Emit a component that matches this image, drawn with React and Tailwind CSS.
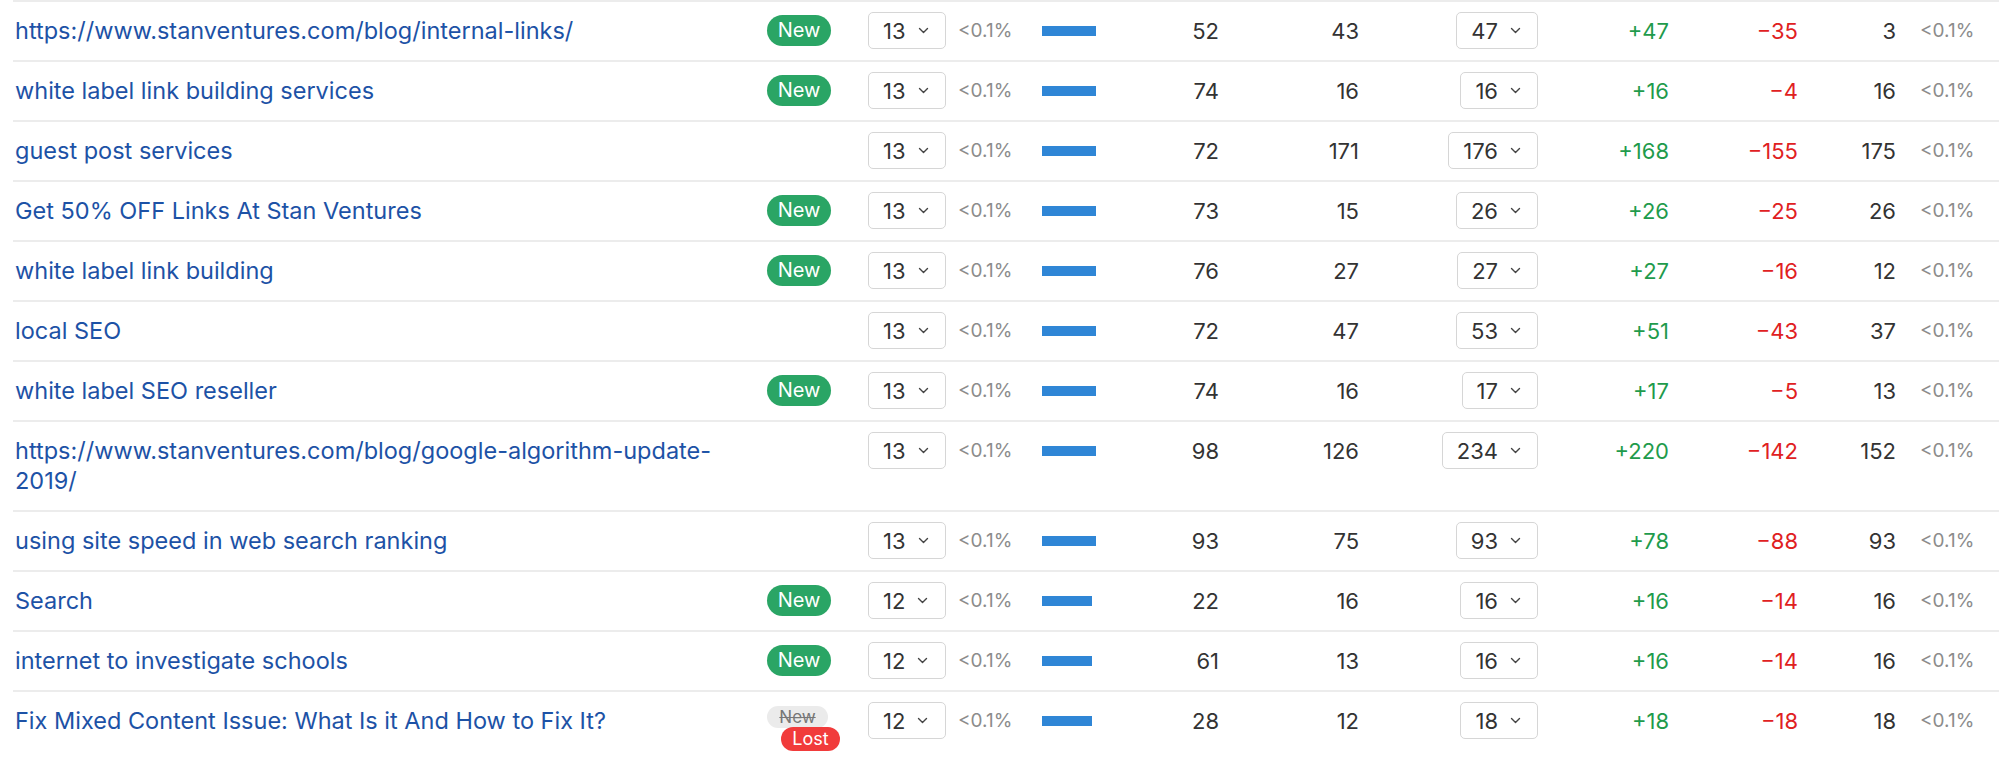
import React from "react";

const rows = [
  { k: "https://www.stanventures.com/blog/internal-links/", badge: "new", d1: 13, a: 52, b: 43, d2: 47, p: 47, m: 35, n: 3 },
  { k: "white label link building services", badge: "new", d1: 13, a: 74, b: 16, d2: 16, p: 16, m: 4, n: 16 },
  { k: "guest post services", d1: 13, a: 72, b: 171, d2: 176, p: 168, m: 155, n: 175 },
  { k: "Get 50% OFF Links At Stan Ventures", badge: "new", d1: 13, a: 73, b: 15, d2: 26, p: 26, m: 25, n: 26 },
  { k: "white label link building", badge: "new", d1: 13, a: 76, b: 27, d2: 27, p: 27, m: 16, n: 12 },
  { k: "local SEO", d1: 13, a: 72, b: 47, d2: 53, p: 51, m: 43, n: 37 },
  { k: "white label SEO reseller", badge: "new", d1: 13, a: 74, b: 16, d2: 17, p: 17, m: 5, n: 13 },
  { k: "https://www.stanventures.com/blog/google-algorithm-update-2019/", d1: 13, a: 98, b: 126, d2: 234, p: 220, m: 142, n: 152 },
  { k: "using site speed in web search ranking", d1: 13, a: 93, b: 75, d2: 93, p: 78, m: 88, n: 93 },
  { k: "Search", badge: "new", d1: 12, a: 22, b: 16, d2: 16, p: 16, m: 14, n: 16 },
  { k: "internet to investigate schools", badge: "new", d1: 12, a: 61, b: 13, d2: 16, p: 16, m: 14, n: 16 },
  { k: "Fix Mixed Content Issue: What Is it And How to Fix It?", badge: "lost", d1: 12, a: 28, b: 12, d2: 18, p: 18, m: 18, n: 18 },
];

const Chevron = () => (
  <svg width="11" height="7" viewBox="0 0 11 7" fill="none">
    <path d="M1.5 1.5l4 4 4-4" stroke="#444" strokeWidth="1.4" strokeLinecap="round" strokeLinejoin="round" />
  </svg>
);

const Select = ({ value }) => (
  <div className="mt-[10px] h-[37px] flex items-center gap-[12px] pl-[14px] pr-[16px] border-[1.5px] border-[#d6d6d6] rounded-[5px] bg-white text-[22px] leading-[30px] text-[#333]">
    <span>{value}</span>
    <Chevron />
  </div>
);

const Badge = ({ type }) => {
  if (type === "new") {
    return (
      <div className="mt-[13px] w-[64px] h-[31px] rounded-full bg-[#2aa565] text-white text-[20px] leading-[31px] text-center">
        New
      </div>
    );
  }
  if (type === "lost") {
    return (
      <div className="mt-[14px] flex flex-col items-start">
        <div className="w-[61px] h-[22px] rounded-full bg-[#ebebeb] text-[#777] text-[17px] leading-[22px] text-center line-through">
          New
        </div>
        <div className="ml-[14px] -mt-[1px] w-[59px] h-[24px] rounded-full bg-[#f13b3b] text-white text-[18px] leading-[24px] text-center">
          Lost
        </div>
      </div>
    );
  }
  return null;
};

export default function App() {
  return (
    <div className="bg-white pl-[13px] font-['Inter',sans-serif] antialiased">
      {rows.map((r, i) => (
        <div key={i} className="flex items-start border-t-2 border-[#ececec]">
          <div className="w-[752px] pl-[2px] pr-[22px] py-[14px] text-[23.5px] leading-[30px] text-[#1d52a6]">
            {r.k}
          </div>
          <div className="w-[103px] pl-[2px]">
            <Badge type={r.badge} />
          </div>
          <div className="w-[78px]">
            <Select value={r.d1} />
          </div>
          <div className="ml-[12px] w-[54px] py-[14px] text-[19px] leading-[30px] text-[#8c8c8c] whitespace-nowrap">&lt;0.1%</div>
          <div className="ml-[30px] w-[54px] pt-[24px]">
            <div className={r.d1 === 13 ? "h-[10px] w-[54px] bg-[#2f86d6]" : "h-[10px] w-[50px] bg-[#2f86d6]"} />
          </div>
          <div className="w-[123px] py-[14px] text-right text-[22px] leading-[30px] text-[#333]">{r.a}</div>
          <div className="w-[140px] py-[14px] text-right text-[22px] leading-[30px] text-[#333]">{r.b}</div>
          <div className="w-[179px] flex justify-end">
            <Select value={r.d2} />
          </div>
          <div className="w-[131px] py-[14px] text-right text-[22px] leading-[30px] text-[#1f9b4c]">+{r.p}</div>
          <div className="w-[129px] py-[14px] text-right text-[22px] leading-[30px] text-[#e0211f]">−{r.m}</div>
          <div className="w-[98px] py-[14px] text-right text-[22px] leading-[30px] text-[#333]">{r.n}</div>
          <div className="ml-[24px] py-[14px] text-[19px] leading-[30px] text-[#8c8c8c] whitespace-nowrap">&lt;0.1%</div>
        </div>
      ))}
    </div>
  );
}
